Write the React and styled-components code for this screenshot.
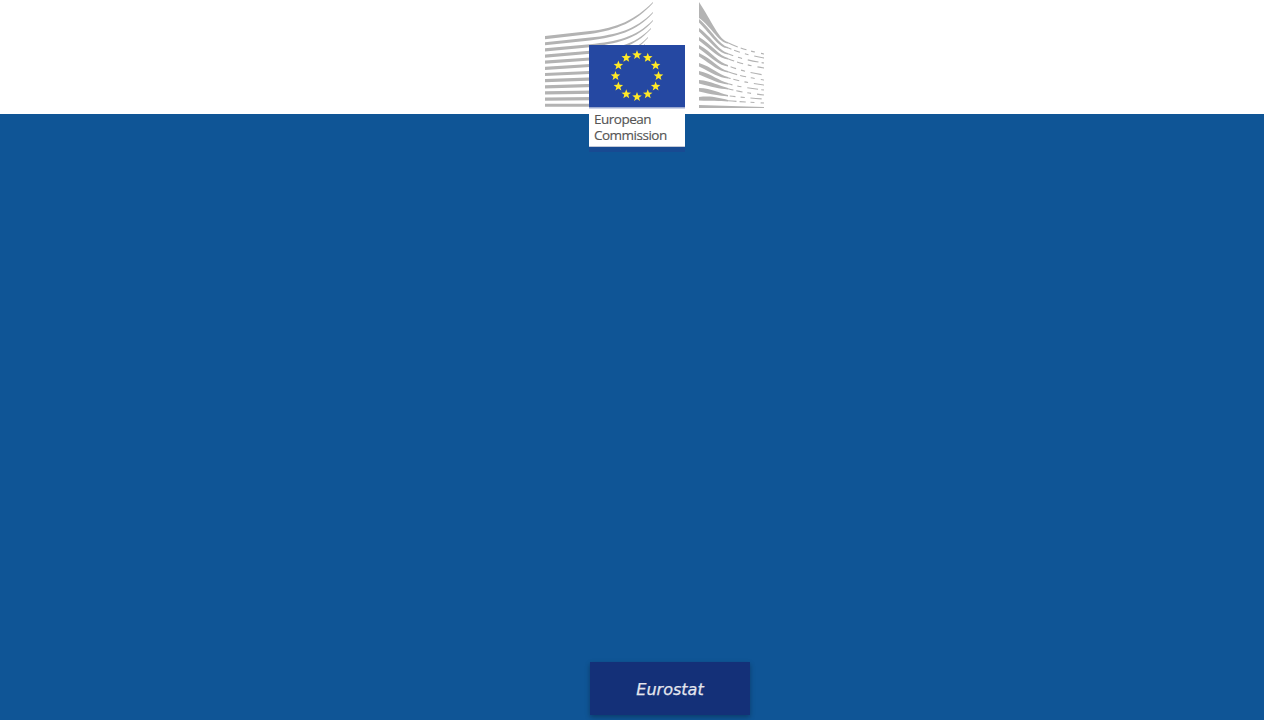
import React from "react";
import styled, { createGlobalStyle } from "styled-components";

const GlobalStyle = createGlobalStyle`
  html, body {
    margin: 0;
    padding: 0;
    height: 100%;
    overflow: hidden;
    background: #0f5596;
  }
`;

const Page = styled.div`
  position: relative;
  height: 100vh;
  display: flex;
  flex-direction: column;
  font-family: "DejaVu Sans", "Liberation Sans", sans-serif;
`;

const Header = styled.header`
  height: 114px;
  flex-shrink: 0;
  background: #fff;
`;

const Main = styled.main`
  flex: 1;
  background: #0f5596;
`;

const Footer = styled.footer`
  display: flex;
  padding: 0 0 5px 590px;
  background: #0f5596;
`;

const Logo = styled.svg`
  position: absolute;
  top: 0;
  left: 545px;
  display: block;
`;

const LogoLabel = styled.text`
  font-family: "Open Sans", "Noto Sans", sans-serif;
  font-size: 13.5px;
  letter-spacing: -0.5px;
  fill: #555;
  stroke: #555;
  stroke-width: 0.15px;
`;

const EurostatButton = styled.a`
  width: 160px;
  height: 53px;
  padding-top: 1px;
  box-sizing: border-box;
  display: flex;
  align-items: center;
  justify-content: center;
  background: #143078;
  box-shadow: 0 2px 5px rgba(0, 0, 0, 0.3);
  color: #e4e6ee;
  font-size: 16px;
  font-style: italic;
  text-decoration: none;
  -webkit-text-stroke: 0.25px #e4e6ee;
`;

const GREY = "#b3b3b3";

// left wing of the Berlaymont drawing, 12 slats (origin is the logo's top left)
const leftSlats = Array.from({ length: 12 }, (_, i) => {
  const y = 36 + i * 6.15;
  const yMid = y - 5 * (1 - i / 11);
  if (i < 6) {
    const yEnd = [2, 12, 20, 28, 37, 44][i];
    const xEnd = [108, 108, 108, 106, 103, 100][i];
    return `M0,${y} L45,${yMid} C72,${yMid - 3} ${xEnd - 18},${yEnd + 18} ${xEnd},${yEnd} L${xEnd},${yEnd + 1} C${xEnd - 17},${yEnd + 20} 72,${yMid - 1} 45,${yMid + 3} L0,${y + 3.2} Z`;
  }
  return `M0,${y} L50,${yMid} L50,${yMid + 3.2} L0,${y + 3.2} Z`;
});

// right wing: y where each slat leaves the left edge, passes the bend, reaches the edge
const rightWing = [
  [7, 42, 54],
  [19, 47, 58],
  [28, 53, 63],
  [37, 58, 68],
  [45, 65, 75],
  [53, 71, 80],
  [63, 77, 85],
  [71, 83, 90],
  [80, 88, 95],
  [88, 95, 99],
  [97, 100, 103],
];

const rightSlats = rightWing.map(([start, bend, end], i) => {
  const top = i === 0 ? 2 : start;
  const bottom = i === 0 ? 18 : start + 3.6;
  const ctrl = start + (bend - start) * 0.5;
  return {
    solid: `M154,${top} L154,${bottom} C167,${ctrl + 3} 174,${bend + 1} 183,${bend + 1.4} L183,${bend} C174,${bend - 2} 167,${ctrl - 3} 154,${top} Z`,
    dash: `M183,${bend + 0.7} Q197,${bend + (end - bend) * 0.65} 219,${end}`,
    offset: (i * 7) % 17,
  };
});

const starPath = (cx, cy, r) => {
  const pts = [];
  for (let k = 0; k < 10; k++) {
    const rad = k % 2 === 0 ? r : r * 0.42;
    const a = -Math.PI / 2 + (k * Math.PI) / 5;
    pts.push(`${(cx + rad * Math.cos(a)).toFixed(2)},${(cy + rad * Math.sin(a)).toFixed(2)}`);
  }
  return pts.join(" ");
};

const stars = Array.from({ length: 12 }, (_, i) => {
  const a = (i * Math.PI) / 6;
  return starPath(92 + 21.5 * Math.sin(a), 76 - 21 * Math.cos(a), 5);
});

const EcLogo = () => (
  <Logo width="220" height="153" viewBox="0 0 220 153">
    {leftSlats.map((d) => (
      <path key={d} d={d} fill={GREY} />
    ))}
    {rightSlats.map((s) => (
      <g key={s.solid}>
        <path d={s.solid} fill={GREY} />
        <path
          d={s.dash}
          stroke={GREY}
          strokeWidth="1.1"
          strokeDasharray="11 3 6 5 4 6"
          strokeDashoffset={s.offset}
          fill="none"
        />
      </g>
    ))}
    <path d="M154,105 L219,107 L219,108 L154,108 Z" fill={GREY} />
    <rect x="44" y="147" width="96" height="5" fill="#184a92" />
    <rect x="44" y="107" width="96" height="40" fill="#fff" />
    <rect x="44" y="146" width="96" height="1" fill="#c3cad8" />
    <rect x="44" y="45" width="96" height="62" fill="#2548a2" />
    <rect x="44" y="107" width="96" height="1.5" fill="#9aa8d0" />
    {stars.map((p) => (
      <polygon key={p} points={p} fill="#ffe926" />
    ))}
    <LogoLabel x="49" y="124">European</LogoLabel>
    <LogoLabel x="49" y="140">Commission</LogoLabel>
  </Logo>
);

export default function App() {
  return (
    <>
      <GlobalStyle />
      <Page>
        <Header />
        <Main />
        <Footer>
          <EurostatButton href="#">Eurostat</EurostatButton>
        </Footer>
        <EcLogo />
      </Page>
    </>
  );
}
